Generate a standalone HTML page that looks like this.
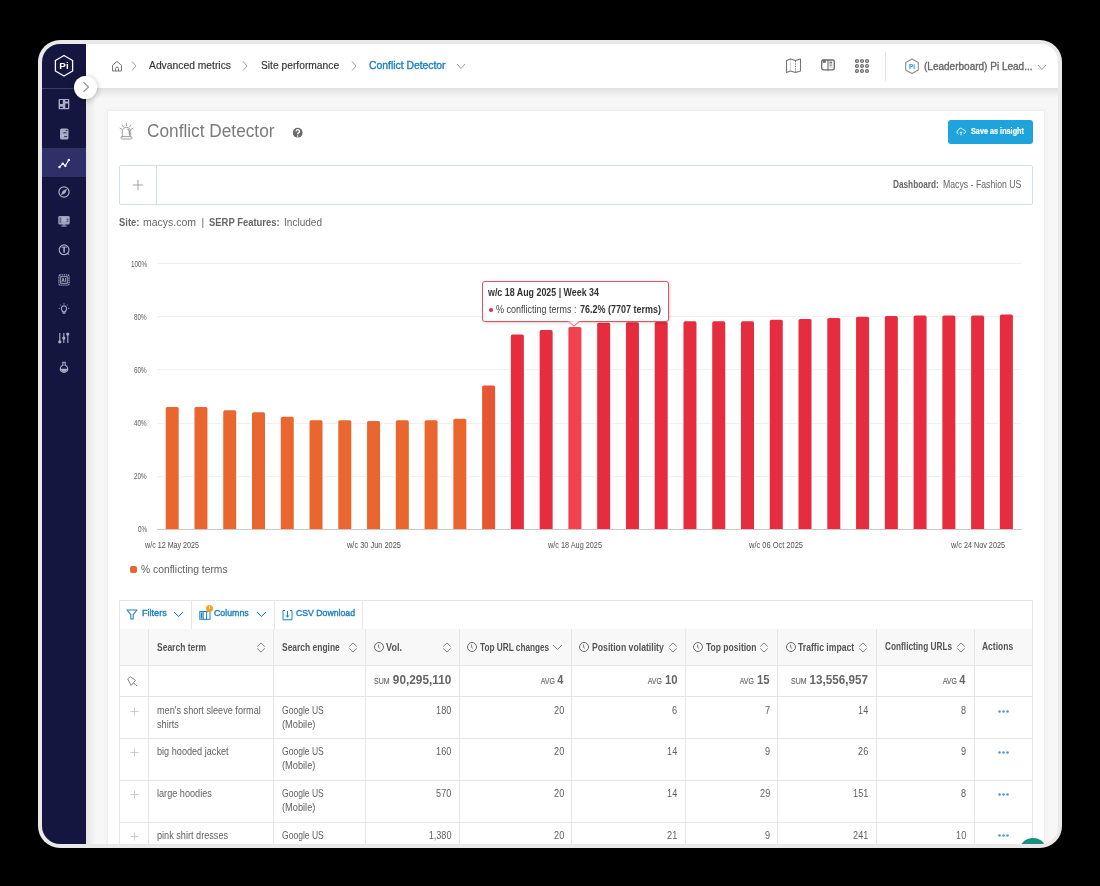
<!DOCTYPE html>
<html><head><meta charset="utf-8"><style>
html,body{margin:0;padding:0;}
body{width:1100px;height:886px;background:#000;position:relative;overflow:hidden;font-family:"Liberation Sans", sans-serif;}
.frame{position:absolute;left:38px;top:40px;width:1024px;height:808px;border-radius:22px;background:#e9e9e9;}
.clip{position:absolute;left:42px;top:44px;width:1016px;height:800px;border-radius:18px;overflow:hidden;background:#fff;}
.pg{will-change:transform;position:absolute;left:-42px;top:-44px;width:1100px;height:886px;}
.t{position:absolute;white-space:nowrap;line-height:1;font-family:"Liberation Sans", sans-serif;}
svg{overflow:visible;}
</style></head><body>
<div class="frame"></div>
<div class="clip"><div class="pg">
<div style="position:absolute;left:42.00px;top:44.00px;width:44.00px;height:800.00px;background:#15163f;"></div>
<div style="position:absolute;left:86.00px;top:88.00px;width:972.00px;height:756.00px;background:#f7f7f7;"></div>
<div style="position:absolute;left:86.00px;top:88.00px;width:10.00px;height:756.00px;background:linear-gradient(to right, rgba(0,0,0,0.075), rgba(0,0,0,0));"></div>
<div style="position:absolute;left:86.00px;top:44.00px;width:972.00px;height:44.00px;background:#fff;"></div>
<div style="position:absolute;left:86.00px;top:88.00px;width:972.00px;height:10.00px;background:linear-gradient(to bottom, rgba(0,0,0,0.09), rgba(0,0,0,0));"></div>
<svg style="position:absolute;left:53.00px;top:54.00px;" width="22" height="24" viewBox="0 0 22 24"><path d="M11 1.5 L19.6 6.5 L19.6 17 L11 22 L2.4 17 L2.4 6.5 Z" fill="none" stroke="#fff" stroke-width="1.3" stroke-linejoin="round"/><text x="11" y="15.3" text-anchor="middle" font-family="Liberation Sans" font-weight="700" font-size="9.8" fill="#fff">Pi</text></svg>
<div style="position:absolute;left:42.00px;top:88.00px;width:44.00px;height:1.00px;background:#3b3c68;"></div>
<div style="position:absolute;left:42.00px;top:147.50px;width:44.00px;height:29.00px;background:#303068;"></div>
<svg style="position:absolute;left:57.00px;top:97.00px;" width="14" height="14" viewBox="0 0 14 14"><path fill-rule="evenodd" fill="#aeaec8" d="M2.6 1.9 H11.3 Q12.3 1.9 12.3 2.9 V11.2 Q12.3 12.2 11.3 12.2 H2.6 Q1.6 12.2 1.6 11.2 V2.9 Q1.6 1.9 2.6 1.9 Z M3 3 H5.8 V7 H3 Z M8.3 3 H11 V4.4 H8.3 Z M3 9.8 H5.8 V10.9 H3 Z M8.3 6.4 H11 V10.9 H8.3 Z"/></svg>
<svg style="position:absolute;left:57.00px;top:126.50px;" width="14" height="14" viewBox="0 0 14 14"><rect x="3" y="1.6" width="8.5" height="10.9" rx="1.6" fill="#a9a9c4"/><path d="M8.2 4 L9.6 2.6 L11 4 Z" fill="#15163f" opacity="0.75"/><rect x="6.3" y="5.1" width="3.2" height="1.2" fill="#15163f" opacity="0.7"/><rect x="7.2" y="9" width="3" height="1.1" fill="#15163f" opacity="0.75"/><rect x="4.8" y="8.3" width="2" height="1" fill="#d0d0e2"/></svg>
<svg style="position:absolute;left:57.00px;top:155.50px;" width="14" height="14" viewBox="0 0 14 14"><g fill="none" stroke="#fff" stroke-width="1.05" stroke-linecap="round" stroke-linejoin="round"><polyline points="2.5,11 5.8,7.6 8.3,9.8 11.8,4"/></g><g fill="#fff"><circle cx="2.5" cy="11" r="1.2"/><circle cx="5.8" cy="7.6" r="1.2"/><circle cx="8.3" cy="9.8" r="1.2"/><circle cx="11.8" cy="4" r="1.2"/></g></svg>
<svg style="position:absolute;left:57.00px;top:184.60px;" width="14" height="14" viewBox="0 0 14 14"><circle cx="7" cy="7" r="5.1" fill="none" stroke="#aeaec8" stroke-width="1.2"/><path d="M10.2 3.8 L8.2 8.2 L3.8 10.2 L5.8 5.8 Z" fill="#aeaec8"/></svg>
<svg style="position:absolute;left:57.00px;top:213.50px;" width="14" height="14" viewBox="0 0 14 14"><rect x="1.3" y="2" width="11.4" height="8.4" rx="1.3" fill="#a2a2c0"/><rect x="2.6" y="3.3" width="1.6" height="5.8" fill="#15163f" opacity="0.45"/><g stroke="#15163f" stroke-width="0.8" opacity="0.8"><line x1="9.6" y1="5.3" x2="11.4" y2="5.3"/><line x1="9.6" y1="7.2" x2="11.4" y2="7.2"/></g><g stroke="#c4c4da" stroke-width="0.8"><line x1="5" y1="4.3" x2="9" y2="4.3"/><line x1="5" y1="6.3" x2="9" y2="6.3"/></g><rect x="5.6" y="10.4" width="2.8" height="1.2" fill="#a2a2c0"/><rect x="4.3" y="11.6" width="5.4" height="1" fill="#a2a2c0"/></svg>
<svg style="position:absolute;left:57.00px;top:243.00px;" width="14" height="14" viewBox="0 0 14 14"><circle cx="7.1" cy="6.8" r="4.9" fill="none" stroke="#aeaec8" stroke-width="1.15"/><path d="M4.6 4.6 Q4.9 4 5.6 4 H8.6 Q9.3 4 9.6 4.6" fill="none" stroke="#aeaec8" stroke-width="1.1"/><rect x="6.3" y="4" width="1.6" height="5.6" fill="#aeaec8"/><line x1="10.6" y1="10.4" x2="12" y2="11.6" stroke="#aeaec8" stroke-width="1.1"/></svg>
<svg style="position:absolute;left:57.00px;top:272.60px;" width="14" height="14" viewBox="0 0 14 14"><rect x="1.9" y="1.9" width="10.2" height="10.2" rx="1.4" fill="none" stroke="#aeaec8" stroke-width="1.3" stroke-dasharray="1.1,0.8"/><rect x="3.7" y="3.7" width="6.6" height="6.6" fill="none" stroke="#aeaec8" stroke-width="0.9"/><path d="M5 9 L6.1 5 L7.2 9 M5.4 7.7 H6.8 M8.6 5 V9" fill="none" stroke="#aeaec8" stroke-width="0.8"/></svg>
<svg style="position:absolute;left:57.00px;top:302.00px;" width="14" height="14" viewBox="0 0 14 14"><g transform="translate(7 7) scale(0.82) translate(-7 -7)"><path d="M7 3 a3.3 3.3 0 0 1 2 5.9 V10.4 H5 V8.9 a3.3 3.3 0 0 1 2 -5.9 Z" fill="none" stroke="#aeaec8" stroke-width="1.3"/><rect x="5.2" y="11" width="3.6" height="1.9" rx="0.6" fill="#aeaec8"/><g stroke="#aeaec8" stroke-width="1"><line x1="7" y1="0" x2="7" y2="1.6"/><line x1="2.4" y1="1.8" x2="3.5" y2="2.9"/><line x1="11.6" y1="1.8" x2="10.5" y2="2.9"/><line x1="0.4" y1="6.2" x2="2" y2="6.2"/><line x1="13.6" y1="6.2" x2="12" y2="6.2"/></g></g></svg>
<svg style="position:absolute;left:57.00px;top:331.20px;" width="14" height="14" viewBox="0 0 14 14"><g stroke="#aeaec8" stroke-width="1.1"><line x1="2.8" y1="2" x2="2.8" y2="12"/><line x1="6.8" y1="2" x2="6.8" y2="12"/><line x1="10.8" y1="2" x2="10.8" y2="12"/></g><circle cx="2.8" cy="10.8" r="1.6" fill="#aeaec8"/><circle cx="6.8" cy="7" r="1.6" fill="#aeaec8"/><circle cx="10.8" cy="3" r="1.6" fill="#aeaec8"/></svg>
<svg style="position:absolute;left:57.00px;top:360.30px;" width="14" height="14" viewBox="0 0 14 14"><path d="M5.9 2.2 H8.1 V5.3 A3.7 3.7 0 1 1 5.9 5.3 Z" fill="none" stroke="#aeaec8" stroke-width="1.15"/><path d="M3.9 8.7 A3.1 3.1 0 0 0 10.1 8.7 Z" fill="#aeaec8"/></svg>
<div style="position:absolute;left:74.3px;top:76.1px;width:22.8px;height:22.8px;border-radius:50%;background:#fff;box-shadow:0 1px 6px rgba(0,0,0,0.28);"></div>
<svg style="position:absolute;left:80.00px;top:81.00px;" width="12" height="12" viewBox="0 0 12 12"><polyline points="3.5,1.2 8.5,6 3.5,10.8" fill="none" stroke="#8a8a8a" stroke-width="1.1"/></svg>
<svg style="position:absolute;left:110.00px;top:59.00px;" width="14" height="14" viewBox="0 0 14 14"><path d="M2.5 12 V6.3 L7 2.4 L11.5 6.3 V12 Z" fill="none" stroke="#777" stroke-width="1" stroke-linejoin="round"/><path d="M5.5 12 V9.6 a1.5 1.5 0 0 1 3 0 V12" fill="none" stroke="#777" stroke-width="1"/></svg>
<svg style="position:absolute;left:130.00px;top:60.00px;" width="8" height="12" viewBox="0 0 8 12"><polyline points="2,1.5 6,6 2,10.5" fill="none" stroke="#9a9a9a" stroke-width="1"/></svg>
<div class="t" style="left:149.00px;top:60.68px;font-size:10.3px;color:#333;font-weight:400;transform:scaleX(1.0017);transform-origin:left;-webkit-text-stroke:0.15px #333;">Advanced metrics</div>
<svg style="position:absolute;left:241.00px;top:60.00px;" width="8" height="12" viewBox="0 0 8 12"><polyline points="2,1.5 6,6 2,10.5" fill="none" stroke="#9a9a9a" stroke-width="1"/></svg>
<div class="t" style="left:260.70px;top:60.68px;font-size:10.3px;color:#333;font-weight:400;transform:scaleX(0.9958);transform-origin:left;-webkit-text-stroke:0.15px #333;">Site performance</div>
<svg style="position:absolute;left:350.00px;top:60.00px;" width="8" height="12" viewBox="0 0 8 12"><polyline points="2,1.5 6,6 2,10.5" fill="none" stroke="#9a9a9a" stroke-width="1"/></svg>
<div class="t" style="left:369.20px;top:60.68px;font-size:10.3px;color:#1b80c2;font-weight:400;transform:scaleX(1.0061);transform-origin:left;-webkit-text-stroke:0.35px #1b80c2;">Conflict Detector</div>
<svg style="position:absolute;left:456.00px;top:62.00px;" width="10" height="8" viewBox="0 0 10 8"><polyline points="1,2 5.0,6.5 9,2" fill="none" stroke="#9a9a9a" stroke-width="1"/></svg>
<svg style="position:absolute;left:785.00px;top:57.00px;" width="17" height="17" viewBox="0 0 17 17"><path d="M1.5 3.5 L5.5 2 L10.5 3.5 L15.5 2 V14 L10.5 15.5 L5.5 14 L1.5 15.5 Z" fill="none" stroke="#747474" stroke-width="1.05" stroke-linejoin="round"/><line x1="5.5" y1="3.2" x2="5.5" y2="13.5" stroke="#b0b0b0" stroke-width="0.8" stroke-dasharray="1.2,0.9"/><line x1="10.5" y1="4" x2="10.5" y2="15" stroke="#6a6a6a" stroke-width="0.9" stroke-dasharray="1.3,1.1"/></svg>
<svg style="position:absolute;left:820.00px;top:58.00px;" width="16" height="15" viewBox="0 0 16 15"><rect x="1.7" y="2" width="12.6" height="9.8" rx="1.6" fill="none" stroke="#6a6a6a" stroke-width="1.3"/><rect x="2.8" y="2" width="3" height="2.8" fill="#6a6a6a"/><line x1="8" y1="2" x2="8" y2="11.8" stroke="#6a6a6a" stroke-width="1.1"/><rect x="9.4" y="3.6" width="2.8" height="1.9" fill="#777"/><rect x="9.4" y="6.6" width="3" height="1" fill="#6a6a6a"/><rect x="9.4" y="8.6" width="3" height="0.8" fill="#aaa"/><rect x="7.4" y="12.2" width="1.2" height="1" fill="#888"/></svg>
<svg style="position:absolute;left:855.00px;top:58.50px;" width="15" height="15" viewBox="0 0 15 15"><circle cx="2" cy="2" r="1.4" fill="none" stroke="#6b6b6b" stroke-width="1.35"/><circle cx="2" cy="7" r="1.4" fill="none" stroke="#6b6b6b" stroke-width="1.35"/><circle cx="2" cy="12" r="1.4" fill="none" stroke="#6b6b6b" stroke-width="1.35"/><circle cx="7" cy="2" r="1.4" fill="none" stroke="#6b6b6b" stroke-width="1.35"/><circle cx="7" cy="7" r="1.4" fill="none" stroke="#6b6b6b" stroke-width="1.35"/><circle cx="7" cy="12" r="1.4" fill="none" stroke="#6b6b6b" stroke-width="1.35"/><circle cx="12" cy="2" r="1.4" fill="none" stroke="#6b6b6b" stroke-width="1.35"/><circle cx="12" cy="7" r="1.4" fill="none" stroke="#6b6b6b" stroke-width="1.35"/><circle cx="12" cy="12" r="1.4" fill="none" stroke="#6b6b6b" stroke-width="1.35"/></svg>
<div style="position:absolute;left:885.00px;top:51.50px;width:1.00px;height:29.00px;background:#e3e3e3;"></div>
<svg style="position:absolute;left:903.50px;top:57.50px;" width="16" height="17" viewBox="0 0 16 17"><path d="M8 1 L14.3 4.6 V11.9 L8 15.5 L1.7 11.9 V4.6 Z" fill="none" stroke="#8c8c8c" stroke-width="1.1" stroke-linejoin="round"/><text x="8" y="11" text-anchor="middle" font-family="Liberation Sans" font-weight="700" font-size="6.5" fill="#2a94d6">Pi</text></svg>
<div class="t" style="left:924.00px;top:61.01px;font-size:10.5px;color:#666;font-weight:400;transform:scaleX(0.9532);transform-origin:left;-webkit-text-stroke:0.35px #666;">(Leaderboard) Pi Lead...</div>
<svg style="position:absolute;left:1037.00px;top:62.50px;" width="10" height="8" viewBox="0 0 10 8"><polyline points="1,2 5.0,6.5 9,2" fill="none" stroke="#9a9a9a" stroke-width="1"/></svg>
<div style="position:absolute;left:107.00px;top:110.00px;width:938.00px;height:790.00px;background:#fff;border:1px solid #ededed;box-sizing:border-box;box-shadow:0 0 4px rgba(0,0,0,0.04);"></div>
<svg style="position:absolute;left:119.00px;top:122.00px;" width="15" height="18" viewBox="0 0 15 18"><g fill="none" stroke="#9a9a9a" stroke-width="0.95" stroke-linecap="round"><path d="M3.3 14.8 V9.5 A4.2 4.2 0 0 1 11.7 9.5 V14.8"/><rect x="2" y="14.6" width="11" height="2.4" rx="1.2"/><line x1="7.5" y1="1.5" x2="7.5" y2="3.6"/><line x1="3.4" y1="3" x2="4.3" y2="4.8"/><line x1="11.6" y1="3" x2="10.7" y2="4.8"/><line x1="1" y1="6.2" x2="2.6" y2="7.2"/><line x1="14" y1="6.2" x2="12.4" y2="7.2"/><path d="M8.8 7.2 A2.6 2.6 0 0 1 10.4 9.6 V13" stroke-width="1.3"/></g></svg>
<div class="t" style="left:147.00px;top:122.99px;font-size:17.5px;color:#7a7a7a;font-weight:400;transform:scaleX(0.9857);transform-origin:left;">Conflict Detector</div>
<svg style="position:absolute;left:292.00px;top:127.20px;" width="12" height="12" viewBox="0 0 12 12"><circle cx="5.7" cy="5.7" r="4.9" fill="#6a6a6a"/><path d="M4.1 4.4 A1.7 1.7 0 1 1 6.5 5.9 Q5.7 6.4 5.7 7.3" fill="none" stroke="#fff" stroke-width="1.3"/><circle cx="5.7" cy="8.9" r="0.75" fill="#fff"/></svg>
<div style="position:absolute;left:948.00px;top:120.00px;width:84.70px;height:23.70px;background:#1fa3dd;border-radius:3px;"></div>
<svg style="position:absolute;left:955.50px;top:126.50px;" width="10" height="9" viewBox="0 0 10 9"><path d="M2.6 6.8 H2.2 A1.8 1.8 0 0 1 2.3 3.3 A2.5 2.5 0 0 1 7.1 2.8 A1.9 1.9 0 0 1 7.8 6.8 H7.4" fill="none" stroke="#fff" stroke-width="0.85"/><path d="M5 8.4 V4.8 M3.8 6 L5 4.7 L6.2 6" fill="none" stroke="#fff" stroke-width="0.85"/></svg>
<div class="t" style="left:971.00px;top:126.09px;font-size:9.7px;color:#fff;font-weight:700;transform:scaleX(0.7505);transform-origin:left;-webkit-text-stroke:0.2px #fff;">Save as insight</div>
<div style="position:absolute;left:119.00px;top:165.00px;width:914.00px;height:40.00px;border:1px solid #cfe1f0;border-radius:2px;box-sizing:border-box;"></div>
<div style="position:absolute;left:156.00px;top:165.00px;width:1.00px;height:40.00px;background:#cfe1f0;"></div>
<svg style="position:absolute;left:132.00px;top:179.00px;" width="12" height="12" viewBox="0 0 12 12"><path d="M6 0.8 V11.2 M0.8 6 H11.2" stroke="#999" stroke-width="0.9"/></svg>
<div class="t" style="left:892.50px;top:179.63px;font-size:10px;color:#666;font-weight:700;transform:scaleX(0.8243);transform-origin:left;">Dashboard:</div>
<div class="t" style="left:942.60px;top:179.63px;font-size:10px;color:#666;font-weight:400;transform:scaleX(0.8709);transform-origin:left;">Macys - Fashion US</div>
<div class="t" style="left:119.00px;top:218.18px;font-size:10.3px;color:#666;font-weight:700;transform:scaleX(0.914);transform-origin:left;">Site:</div>
<div class="t" style="left:143.40px;top:218.18px;font-size:10.3px;color:#666;font-weight:400;transform:scaleX(1.0177);transform-origin:left;">macys.com</div>
<div class="t" style="left:201.60px;top:218.18px;font-size:10.3px;color:#666;font-weight:400;">|</div>
<div class="t" style="left:209.40px;top:218.18px;font-size:10.3px;color:#666;font-weight:700;transform:scaleX(0.9158);transform-origin:left;">SERP Features:</div>
<div class="t" style="left:284.00px;top:218.18px;font-size:10.3px;color:#666;font-weight:400;transform:scaleX(0.9758);transform-origin:left;">Included</div>
<div style="position:absolute;left:157.00px;top:529.00px;width:865.00px;height:1.40px;background:#c9c9c9;"></div>
<div class="t" style="right:953.20px;top:525.47px;font-size:8.3px;color:#5a5a5a;font-weight:400;transform:scaleX(0.76);transform-origin:right;">0%</div>
<div style="position:absolute;left:157.00px;top:476.00px;width:865.00px;height:1.00px;background:#f0f0f0;"></div>
<div class="t" style="right:953.20px;top:472.33px;font-size:8.3px;color:#5a5a5a;font-weight:400;transform:scaleX(0.76);transform-origin:right;">20%</div>
<div style="position:absolute;left:157.00px;top:423.00px;width:865.00px;height:1.00px;background:#f0f0f0;"></div>
<div class="t" style="right:953.20px;top:419.19px;font-size:8.3px;color:#5a5a5a;font-weight:400;transform:scaleX(0.76);transform-origin:right;">40%</div>
<div style="position:absolute;left:157.00px;top:369.00px;width:865.00px;height:1.00px;background:#f0f0f0;"></div>
<div class="t" style="right:953.20px;top:366.05px;font-size:8.3px;color:#5a5a5a;font-weight:400;transform:scaleX(0.76);transform-origin:right;">60%</div>
<div style="position:absolute;left:157.00px;top:316.00px;width:865.00px;height:1.00px;background:#f0f0f0;"></div>
<div class="t" style="right:953.20px;top:312.91px;font-size:8.3px;color:#5a5a5a;font-weight:400;transform:scaleX(0.76);transform-origin:right;">80%</div>
<div style="position:absolute;left:157.00px;top:263.00px;width:865.00px;height:1.00px;background:#f0f0f0;"></div>
<div class="t" style="right:953.20px;top:259.77px;font-size:8.3px;color:#5a5a5a;font-weight:400;transform:scaleX(0.76);transform-origin:right;">100%</div>
<svg style="position:absolute;left:150.00px;top:250.00px;" width="880" height="285" viewBox="0 0 880 285"><rect x="14.70" y="155.91" width="15" height="123.59" fill="#fff"/><path d="M15.70,279.50 V158.51 Q15.70,156.91 17.30,156.91 H27.10 Q28.70,156.91 28.70,158.51 V279.50 Z" fill="#e9672e"/><rect x="43.46" y="155.91" width="15" height="123.59" fill="#fff"/><path d="M44.46,279.50 V158.51 Q44.46,156.91 46.06,156.91 H55.86 Q57.46,156.91 57.46,158.51 V279.50 Z" fill="#e9672e"/><rect x="72.23" y="159.37" width="15" height="120.13" fill="#fff"/><path d="M73.23,279.50 V161.97 Q73.23,160.37 74.83,160.37 H84.63 Q86.23,160.37 86.23,161.97 V279.50 Z" fill="#e9672e"/><rect x="101.00" y="161.23" width="15" height="118.27" fill="#fff"/><path d="M102.00,279.50 V163.83 Q102.00,162.23 103.59,162.23 H113.40 Q115.00,162.23 115.00,163.83 V279.50 Z" fill="#e9672e"/><rect x="129.76" y="165.74" width="15" height="113.76" fill="#fff"/><path d="M130.76,279.50 V168.34 Q130.76,166.74 132.36,166.74 H142.16 Q143.76,166.74 143.76,168.34 V279.50 Z" fill="#e9672e"/><rect x="158.52" y="169.20" width="15" height="110.30" fill="#fff"/><path d="M159.52,279.50 V171.80 Q159.52,170.20 161.12,170.20 H170.92 Q172.52,170.20 172.52,171.80 V279.50 Z" fill="#e9672e"/><rect x="187.29" y="169.20" width="15" height="110.30" fill="#fff"/><path d="M188.29,279.50 V171.80 Q188.29,170.20 189.89,170.20 H199.69 Q201.29,170.20 201.29,171.80 V279.50 Z" fill="#e9672e"/><rect x="216.06" y="169.99" width="15" height="109.51" fill="#fff"/><path d="M217.06,279.50 V172.59 Q217.06,170.99 218.66,170.99 H228.46 Q230.06,170.99 230.06,172.59 V279.50 Z" fill="#e9672e"/><rect x="244.82" y="169.20" width="15" height="110.30" fill="#fff"/><path d="M245.82,279.50 V171.80 Q245.82,170.20 247.42,170.20 H257.22 Q258.82,170.20 258.82,171.80 V279.50 Z" fill="#e9672e"/><rect x="273.58" y="169.20" width="15" height="110.30" fill="#fff"/><path d="M274.58,279.50 V171.80 Q274.58,170.20 276.19,170.20 H285.98 Q287.58,170.20 287.58,171.80 V279.50 Z" fill="#e9672e"/><rect x="302.35" y="167.87" width="15" height="111.63" fill="#fff"/><path d="M303.35,279.50 V170.47 Q303.35,168.87 304.95,168.87 H314.75 Q316.35,168.87 316.35,170.47 V279.50 Z" fill="#e9672e"/><rect x="331.12" y="134.39" width="15" height="145.11" fill="#fff"/><path d="M332.12,279.50 V136.99 Q332.12,135.39 333.72,135.39 H343.51 Q345.12,135.39 345.12,136.99 V279.50 Z" fill="#e75632"/><rect x="359.88" y="83.38" width="15" height="196.12" fill="#fff"/><path d="M360.88,279.50 V85.98 Q360.88,84.38 362.48,84.38 H372.28 Q373.88,84.38 373.88,85.98 V279.50 Z" fill="#e52d3f"/><rect x="388.64" y="79.12" width="15" height="200.38" fill="#fff"/><path d="M389.64,279.50 V81.72 Q389.64,80.12 391.25,80.12 H401.04 Q402.64,80.12 402.64,81.72 V279.50 Z" fill="#e52d3f"/><rect x="417.41" y="75.94" width="15" height="203.56" fill="#fff"/><path d="M418.41,279.50 V78.54 Q418.41,76.94 420.01,76.94 H429.81 Q431.41,76.94 431.41,78.54 V279.50 Z" fill="#f2414f"/><rect x="446.17" y="71.69" width="15" height="207.81" fill="#fff"/><path d="M447.17,279.50 V74.29 Q447.17,72.69 448.77,72.69 H458.57 Q460.17,72.69 460.17,74.29 V279.50 Z" fill="#e52d3f"/><rect x="474.94" y="71.15" width="15" height="208.35" fill="#fff"/><path d="M475.94,279.50 V73.75 Q475.94,72.15 477.54,72.15 H487.34 Q488.94,72.15 488.94,73.75 V279.50 Z" fill="#e52d3f"/><rect x="503.70" y="70.89" width="15" height="208.61" fill="#fff"/><path d="M504.70,279.50 V73.49 Q504.70,71.89 506.30,71.89 H516.10 Q517.70,71.89 517.70,73.49 V279.50 Z" fill="#e52d3f"/><rect x="532.47" y="70.36" width="15" height="209.14" fill="#fff"/><path d="M533.47,279.50 V72.96 Q533.47,71.36 535.07,71.36 H544.87 Q546.47,71.36 546.47,72.96 V279.50 Z" fill="#e52d3f"/><rect x="561.23" y="70.36" width="15" height="209.14" fill="#fff"/><path d="M562.23,279.50 V72.96 Q562.23,71.36 563.83,71.36 H573.63 Q575.23,71.36 575.23,72.96 V279.50 Z" fill="#e52d3f"/><rect x="590.00" y="70.36" width="15" height="209.14" fill="#fff"/><path d="M591.00,279.50 V72.96 Q591.00,71.36 592.60,71.36 H602.40 Q604.00,71.36 604.00,72.96 V279.50 Z" fill="#e52d3f"/><rect x="618.77" y="68.76" width="15" height="210.74" fill="#fff"/><path d="M619.77,279.50 V71.36 Q619.77,69.76 621.37,69.76 H631.17 Q632.77,69.76 632.77,71.36 V279.50 Z" fill="#e52d3f"/><rect x="647.53" y="67.97" width="15" height="211.53" fill="#fff"/><path d="M648.53,279.50 V70.57 Q648.53,68.97 650.13,68.97 H659.93 Q661.53,68.97 661.53,70.57 V279.50 Z" fill="#e52d3f"/><rect x="676.30" y="66.90" width="15" height="212.60" fill="#fff"/><path d="M677.30,279.50 V69.50 Q677.30,67.90 678.90,67.90 H688.70 Q690.30,67.90 690.30,69.50 V279.50 Z" fill="#e52d3f"/><rect x="705.06" y="65.84" width="15" height="213.66" fill="#fff"/><path d="M706.06,279.50 V68.44 Q706.06,66.84 707.66,66.84 H717.46 Q719.06,66.84 719.06,68.44 V279.50 Z" fill="#e52d3f"/><rect x="733.83" y="65.04" width="15" height="214.46" fill="#fff"/><path d="M734.83,279.50 V67.64 Q734.83,66.04 736.43,66.04 H746.23 Q747.83,66.04 747.83,67.64 V279.50 Z" fill="#e52d3f"/><rect x="762.59" y="64.51" width="15" height="214.99" fill="#fff"/><path d="M763.59,279.50 V67.11 Q763.59,65.51 765.19,65.51 H774.99 Q776.59,65.51 776.59,67.11 V279.50 Z" fill="#e52d3f"/><rect x="791.36" y="64.51" width="15" height="214.99" fill="#fff"/><path d="M792.36,279.50 V67.11 Q792.36,65.51 793.96,65.51 H803.75 Q805.36,65.51 805.36,67.11 V279.50 Z" fill="#e52d3f"/><rect x="820.12" y="64.51" width="15" height="214.99" fill="#fff"/><path d="M821.12,279.50 V67.11 Q821.12,65.51 822.72,65.51 H832.52 Q834.12,65.51 834.12,67.11 V279.50 Z" fill="#e52d3f"/><rect x="848.88" y="63.45" width="15" height="216.05" fill="#fff"/><path d="M849.88,279.50 V66.05 Q849.88,64.45 851.49,64.45 H861.28 Q862.88,64.45 862.88,66.05 V279.50 Z" fill="#e52d3f"/></svg>
<div style="position:absolute;left:157.00px;top:529.00px;width:865.00px;height:1.40px;background:#c9c9c9;"></div>
<div class="t" style="left:172.20px;top:541.32px;font-size:8.6px;color:#4f4f4f;font-weight:400;transform:translateX(-50%) scaleX(0.8306);transform-origin:center;">w/c 12 May 2025</div>
<div class="t" style="left:373.56px;top:541.32px;font-size:8.6px;color:#4f4f4f;font-weight:400;transform:translateX(-50%) scaleX(0.8622);transform-origin:center;">w/c 30 Jun 2025</div>
<div class="t" style="left:574.91px;top:541.32px;font-size:8.6px;color:#4f4f4f;font-weight:400;transform:translateX(-50%) scaleX(0.8491);transform-origin:center;">w/c 18 Aug 2025</div>
<div class="t" style="left:776.27px;top:541.32px;font-size:8.6px;color:#4f4f4f;font-weight:400;transform:translateX(-50%) scaleX(0.8689);transform-origin:center;">w/c 06 Oct 2025</div>
<div class="t" style="left:977.62px;top:541.32px;font-size:8.6px;color:#4f4f4f;font-weight:400;transform:translateX(-50%) scaleX(0.843);transform-origin:center;">w/c 24 Nov 2025</div>
<div style="position:absolute;left:129.80px;top:565.80px;width:7.40px;height:7.40px;background:#e9672e;border-radius:2px;"></div>
<div class="t" style="left:141.20px;top:565.27px;font-size:10.2px;color:#5f5f5f;font-weight:400;transform:scaleX(1.0129);transform-origin:left;">% conflicting terms</div>
<div style="position:absolute;left:481.5px;top:280.9px;width:187px;height:41.6px;box-sizing:border-box;background:#fff;border:1px solid #e8505c;border-radius:3px;box-shadow:1px 1px 3px rgba(0,0,0,0.18);"></div>
<svg style="position:absolute;left:568.00px;top:320.00px;" width="12" height="8" viewBox="0 0 12 8"><path d="M0.5 1.2 L6 6.2 L11.5 1.2" fill="#fff" stroke="#e8505c" stroke-width="1"/><rect x="0" y="-1" width="12" height="2.2" fill="#fff"/></svg>
<div class="t" style="left:488.00px;top:288.44px;font-size:10px;color:#333;font-weight:700;transform:scaleX(0.8866);transform-origin:left;">w/c 18 Aug 2025 | Week 34</div>
<div style="position:absolute;left:488.6px;top:308px;width:4px;height:4px;border-radius:50%;background:#e5283f;"></div>
<div class="t" style="left:496.30px;top:304.63px;font-size:10px;color:#444;font-weight:400;transform:scaleX(0.8997);transform-origin:left;">% conflicting terms : </div>
<div class="t" style="left:580.00px;top:304.63px;font-size:10px;color:#333;font-weight:700;transform:scaleX(0.8995);transform-origin:left;">76.2% (7707 terms)</div>
<div style="position:absolute;left:119.00px;top:629.00px;width:913.00px;height:36.50px;background:#f8f8f8;"></div>
<div style="position:absolute;left:119.00px;top:600.00px;width:1.00px;height:300.00px;background:#e6e6e6;"></div>
<div style="position:absolute;left:1032.00px;top:600.00px;width:1.00px;height:300.00px;background:#e6e6e6;"></div>
<div style="position:absolute;left:119.00px;top:600.00px;width:914.00px;height:1.00px;background:#e6e6e6;"></div>
<div style="position:absolute;left:191.00px;top:600.00px;width:1.00px;height:29.00px;background:#e6e6e6;"></div>
<div style="position:absolute;left:274.00px;top:600.00px;width:1.00px;height:29.00px;background:#e6e6e6;"></div>
<div style="position:absolute;left:362.00px;top:600.00px;width:1.00px;height:29.00px;background:#e6e6e6;"></div>
<div style="position:absolute;left:119.00px;top:665.00px;width:914.00px;height:1.00px;background:#e6e6e6;"></div>
<div style="position:absolute;left:119.00px;top:696.00px;width:914.00px;height:1.00px;background:#e6e6e6;"></div>
<div style="position:absolute;left:119.00px;top:738.00px;width:914.00px;height:1.00px;background:#e6e6e6;"></div>
<div style="position:absolute;left:119.00px;top:780.00px;width:914.00px;height:1.00px;background:#e6e6e6;"></div>
<div style="position:absolute;left:119.00px;top:822.00px;width:914.00px;height:1.00px;background:#e6e6e6;"></div>
<div style="position:absolute;left:148.00px;top:629.00px;width:1.00px;height:271.00px;background:#e6e6e6;"></div>
<div style="position:absolute;left:273.00px;top:629.00px;width:1.00px;height:271.00px;background:#e6e6e6;"></div>
<div style="position:absolute;left:365.00px;top:629.00px;width:1.00px;height:271.00px;background:#e6e6e6;"></div>
<div style="position:absolute;left:459.00px;top:629.00px;width:1.00px;height:271.00px;background:#e6e6e6;"></div>
<div style="position:absolute;left:571.00px;top:629.00px;width:1.00px;height:271.00px;background:#e6e6e6;"></div>
<div style="position:absolute;left:685.00px;top:629.00px;width:1.00px;height:271.00px;background:#e6e6e6;"></div>
<div style="position:absolute;left:777.00px;top:629.00px;width:1.00px;height:271.00px;background:#e6e6e6;"></div>
<div style="position:absolute;left:876.00px;top:629.00px;width:1.00px;height:271.00px;background:#e6e6e6;"></div>
<div style="position:absolute;left:974.00px;top:629.00px;width:1.00px;height:271.00px;background:#e6e6e6;"></div>
<svg style="position:absolute;left:126.00px;top:609.00px;" width="12" height="11" viewBox="0 0 12 11"><path d="M1 1 H11 L7.2 5.6 V10 H4.8 V5.6 Z" fill="none" stroke="#1c80c3" stroke-width="1.05" stroke-linejoin="round"/></svg>
<div class="t" style="left:141.50px;top:608.40px;font-size:9.8px;color:#1c80c3;font-weight:400;transform:scaleX(0.9259);transform-origin:left;-webkit-text-stroke:0.4px #1c80c3;">Filters</div>
<svg style="position:absolute;left:173.20px;top:609.80px;" width="11" height="8" viewBox="0 0 11 8"><polyline points="1,2 5.5,6.5 10,2" fill="none" stroke="#1c80c3" stroke-width="1"/></svg>
<svg style="position:absolute;left:198.50px;top:609.00px;" width="12" height="11" viewBox="0 0 12 11"><g fill="none" stroke="#1c80c3" stroke-width="1"><rect x="0.8" y="2.5" width="10.2" height="7.8"/><line x1="4.2" y1="2.5" x2="4.2" y2="10.3"/><line x1="7.6" y1="2.5" x2="7.6" y2="10.3"/></g><rect x="1.8" y="3.5" width="1.6" height="6" fill="#1c80c3"/></svg>
<div style="position:absolute;left:205.8px;top:604.8px;width:7.6px;height:7.6px;border-radius:50%;background:#f5a31f;"></div>
<div style="position:absolute;left:209.1px;top:606.3px;width:1px;height:3.2px;background:#fff;opacity:0.8"></div>
<div class="t" style="left:213.70px;top:608.40px;font-size:9.8px;color:#1c80c3;font-weight:400;transform:scaleX(0.8974);transform-origin:left;-webkit-text-stroke:0.4px #1c80c3;">Columns</div>
<svg style="position:absolute;left:256.00px;top:609.80px;" width="11" height="8" viewBox="0 0 11 8"><polyline points="1,2 5.5,6.5 10,2" fill="none" stroke="#1c80c3" stroke-width="1"/></svg>
<svg style="position:absolute;left:281.50px;top:608.50px;" width="11" height="12" viewBox="0 0 11 12"><g fill="none" stroke="#1c80c3" stroke-width="1"><path d="M3 1.5 H1 V10.8 H10 V1.5 H8"/><path d="M5.5 2 V8 M3.6 6.2 L5.5 8 L7.4 6.2"/></g></svg>
<div class="t" style="left:296.00px;top:608.40px;font-size:9.8px;color:#1c80c3;font-weight:400;transform:scaleX(0.8878);transform-origin:left;-webkit-text-stroke:0.4px #1c80c3;">CSV Download</div>
<div class="t" style="left:156.90px;top:642.74px;font-size:10px;color:#555;font-weight:700;transform:scaleX(0.8494);transform-origin:left;">Search term</div>
<svg style="position:absolute;left:255.80px;top:641.80px;" width="10" height="11" viewBox="0 0 10 11"><polyline points="1.2,4.6 5,0.9 8.8,4.6" fill="none" stroke="#7a7a7a" stroke-width="0.95"/><polyline points="1.2,6.4 5,10.1 8.8,6.4" fill="none" stroke="#7a7a7a" stroke-width="0.95"/></svg>
<div class="t" style="left:281.80px;top:642.74px;font-size:10px;color:#555;font-weight:700;transform:scaleX(0.8455);transform-origin:left;">Search engine</div>
<svg style="position:absolute;left:347.70px;top:641.80px;" width="10" height="11" viewBox="0 0 10 11"><polyline points="1.2,4.6 5,0.9 8.8,4.6" fill="none" stroke="#7a7a7a" stroke-width="0.95"/><polyline points="1.2,6.4 5,10.1 8.8,6.4" fill="none" stroke="#7a7a7a" stroke-width="0.95"/></svg>
<svg style="position:absolute;left:372.70px;top:640.60px;" width="12" height="12" viewBox="0 0 12 12"><circle cx="6" cy="6" r="4.5" fill="none" stroke="#6a6a6a" stroke-width="1"/><path d="M5.6 3.6 L5.6 6 L6.6 7.6" fill="none" stroke="#6a6a6a" stroke-width="0.9"/></svg>
<div class="t" style="left:386.30px;top:642.74px;font-size:10px;color:#555;font-weight:700;transform:scaleX(0.9095);transform-origin:left;">Vol.</div>
<svg style="position:absolute;left:441.50px;top:641.80px;" width="10" height="11" viewBox="0 0 10 11"><polyline points="1.2,4.6 5,0.9 8.8,4.6" fill="none" stroke="#7a7a7a" stroke-width="0.95"/><polyline points="1.2,6.4 5,10.1 8.8,6.4" fill="none" stroke="#7a7a7a" stroke-width="0.95"/></svg>
<svg style="position:absolute;left:465.90px;top:640.60px;" width="12" height="12" viewBox="0 0 12 12"><circle cx="6" cy="6" r="4.5" fill="none" stroke="#6a6a6a" stroke-width="1"/><path d="M5.6 3.6 L5.6 6 L6.6 7.6" fill="none" stroke="#6a6a6a" stroke-width="0.9"/></svg>
<div class="t" style="left:480.00px;top:642.74px;font-size:10px;color:#555;font-weight:700;transform:scaleX(0.823);transform-origin:left;">Top URL changes</div>
<svg style="position:absolute;left:552.30px;top:643.00px;" width="11" height="8" viewBox="0 0 11 8"><polyline points="1,2 5.5,6.5 10,2" fill="none" stroke="#777" stroke-width="0.95"/></svg>
<svg style="position:absolute;left:578.00px;top:640.60px;" width="12" height="12" viewBox="0 0 12 12"><circle cx="6" cy="6" r="4.5" fill="none" stroke="#6a6a6a" stroke-width="1"/><path d="M5.6 3.6 L5.6 6 L6.6 7.6" fill="none" stroke="#6a6a6a" stroke-width="0.9"/></svg>
<div class="t" style="left:591.80px;top:642.74px;font-size:10px;color:#555;font-weight:700;transform:scaleX(0.8673);transform-origin:left;">Position volatility</div>
<svg style="position:absolute;left:667.80px;top:641.80px;" width="10" height="11" viewBox="0 0 10 11"><polyline points="1.2,4.6 5,0.9 8.8,4.6" fill="none" stroke="#7a7a7a" stroke-width="0.95"/><polyline points="1.2,6.4 5,10.1 8.8,6.4" fill="none" stroke="#7a7a7a" stroke-width="0.95"/></svg>
<svg style="position:absolute;left:692.00px;top:640.60px;" width="12" height="12" viewBox="0 0 12 12"><circle cx="6" cy="6" r="4.5" fill="none" stroke="#6a6a6a" stroke-width="1"/><path d="M5.6 3.6 L5.6 6 L6.6 7.6" fill="none" stroke="#6a6a6a" stroke-width="0.9"/></svg>
<div class="t" style="left:705.50px;top:642.74px;font-size:10px;color:#555;font-weight:700;transform:scaleX(0.8524);transform-origin:left;">Top position</div>
<svg style="position:absolute;left:759.40px;top:641.80px;" width="10" height="11" viewBox="0 0 10 11"><polyline points="1.2,4.6 5,0.9 8.8,4.6" fill="none" stroke="#7a7a7a" stroke-width="0.95"/><polyline points="1.2,6.4 5,10.1 8.8,6.4" fill="none" stroke="#7a7a7a" stroke-width="0.95"/></svg>
<svg style="position:absolute;left:784.60px;top:640.60px;" width="12" height="12" viewBox="0 0 12 12"><circle cx="6" cy="6" r="4.5" fill="none" stroke="#6a6a6a" stroke-width="1"/><path d="M5.6 3.6 L5.6 6 L6.6 7.6" fill="none" stroke="#6a6a6a" stroke-width="0.9"/></svg>
<div class="t" style="left:797.80px;top:642.74px;font-size:10px;color:#555;font-weight:700;transform:scaleX(0.8644);transform-origin:left;">Traffic impact</div>
<svg style="position:absolute;left:858.20px;top:641.80px;" width="10" height="11" viewBox="0 0 10 11"><polyline points="1.2,4.6 5,0.9 8.8,4.6" fill="none" stroke="#7a7a7a" stroke-width="0.95"/><polyline points="1.2,6.4 5,10.1 8.8,6.4" fill="none" stroke="#7a7a7a" stroke-width="0.95"/></svg>
<div class="t" style="left:884.50px;top:641.94px;font-size:10px;color:#555;font-weight:700;transform:scaleX(0.8273);transform-origin:left;">Conflicting URLs</div>
<svg style="position:absolute;left:955.80px;top:641.80px;" width="10" height="11" viewBox="0 0 10 11"><polyline points="1.2,4.6 5,0.9 8.8,4.6" fill="none" stroke="#7a7a7a" stroke-width="0.95"/><polyline points="1.2,6.4 5,10.1 8.8,6.4" fill="none" stroke="#7a7a7a" stroke-width="0.95"/></svg>
<div class="t" style="left:981.70px;top:641.94px;font-size:10px;color:#555;font-weight:700;transform:scaleX(0.8481);transform-origin:left;">Actions</div>
<svg style="position:absolute;left:126.00px;top:675.00px;" width="13" height="13" viewBox="0 0 13 13"><g fill="none" stroke="#777" stroke-width="0.9" stroke-linejoin="round" stroke-linecap="round"><path d="M2 3.7 L4.2 1.7 L9.5 5.4 L5.4 10.2 Z"/><line x1="7.6" y1="8" x2="10.9" y2="10.9"/></g></svg>
<div class="t" style="right:648.80px;top:673.43px;font-size:13.2px;color:#666;font-weight:700;transform:scaleX(0.8954);transform-origin:right;">90,295,110</div>
<div class="t" style="right:710.10px;top:677.15px;font-size:8.8px;color:#666;font-weight:400;transform:scaleX(0.7926);transform-origin:right;-webkit-text-stroke:0.15px #666;">SUM</div>
<div class="t" style="right:536.60px;top:673.43px;font-size:13.2px;color:#666;font-weight:700;transform:scaleX(0.8309);transform-origin:right;">4</div>
<div class="t" style="right:545.50px;top:677.15px;font-size:8.8px;color:#666;font-weight:400;transform:scaleX(0.7919);transform-origin:right;-webkit-text-stroke:0.15px #666;">AVG</div>
<div class="t" style="right:422.60px;top:673.43px;font-size:13.2px;color:#666;font-weight:700;transform:scaleX(0.8582);transform-origin:right;">10</div>
<div class="t" style="right:438.00px;top:677.15px;font-size:8.8px;color:#666;font-weight:400;transform:scaleX(0.7919);transform-origin:right;-webkit-text-stroke:0.15px #666;">AVG</div>
<div class="t" style="right:330.70px;top:673.43px;font-size:13.2px;color:#666;font-weight:700;transform:scaleX(0.8582);transform-origin:right;">15</div>
<div class="t" style="right:346.10px;top:677.15px;font-size:8.8px;color:#666;font-weight:400;transform:scaleX(0.7919);transform-origin:right;-webkit-text-stroke:0.15px #666;">AVG</div>
<div class="t" style="right:231.80px;top:673.43px;font-size:13.2px;color:#666;font-weight:700;transform:scaleX(0.8855);transform-origin:right;">13,556,957</div>
<div class="t" style="right:293.10px;top:677.15px;font-size:8.8px;color:#666;font-weight:400;transform:scaleX(0.7926);transform-origin:right;-webkit-text-stroke:0.15px #666;">SUM</div>
<div class="t" style="right:134.30px;top:673.43px;font-size:13.2px;color:#666;font-weight:700;transform:scaleX(0.8309);transform-origin:right;">4</div>
<div class="t" style="right:143.20px;top:677.15px;font-size:8.8px;color:#666;font-weight:400;transform:scaleX(0.7919);transform-origin:right;-webkit-text-stroke:0.15px #666;">AVG</div>
<svg style="position:absolute;left:129.50px;top:706.90px;" width="9" height="9" viewBox="0 0 9 9"><path d="M4.5 0.5 V8.5 M0.5 4.5 H8.5" stroke="#c6c6c6" stroke-width="0.9"/></svg>
<div class="t" style="left:156.60px;top:704.89px;font-size:11px;color:#5f5f5f;font-weight:400;transform:scaleX(0.83);transform-origin:left;">men&#39;s short sleeve formal</div>
<div class="t" style="left:156.60px;top:718.99px;font-size:11px;color:#5f5f5f;font-weight:400;transform:scaleX(0.83);transform-origin:left;">shirts</div>
<div class="t" style="left:281.60px;top:704.89px;font-size:11px;color:#5f5f5f;font-weight:400;transform:scaleX(0.7768);transform-origin:left;">Google US</div>
<div class="t" style="left:281.60px;top:718.99px;font-size:11px;color:#5f5f5f;font-weight:400;transform:scaleX(0.8407);transform-origin:left;">(Mobile)</div>
<div class="t" style="right:648.80px;top:704.89px;font-size:11px;color:#5f5f5f;font-weight:400;transform:scaleX(0.83);transform-origin:right;">180</div>
<div class="t" style="right:536.20px;top:704.89px;font-size:11px;color:#5f5f5f;font-weight:400;transform:scaleX(0.83);transform-origin:right;">20</div>
<div class="t" style="right:422.80px;top:704.89px;font-size:11px;color:#5f5f5f;font-weight:400;transform:scaleX(0.83);transform-origin:right;">6</div>
<div class="t" style="right:330.00px;top:704.89px;font-size:11px;color:#5f5f5f;font-weight:400;transform:scaleX(0.83);transform-origin:right;">7</div>
<div class="t" style="right:231.50px;top:704.89px;font-size:11px;color:#5f5f5f;font-weight:400;transform:scaleX(0.83);transform-origin:right;">14</div>
<div class="t" style="right:134.00px;top:704.89px;font-size:11px;color:#5f5f5f;font-weight:400;transform:scaleX(0.83);transform-origin:right;">8</div>
<svg style="position:absolute;left:997.00px;top:708.50px;" width="14" height="5" viewBox="0 0 14 5"><circle cx="2.5" cy="2.5" r="1.25" fill="#4a98d6"/><circle cx="6.5" cy="2.5" r="1.25" fill="#4a98d6"/><circle cx="10.5" cy="2.5" r="1.25" fill="#4a98d6"/></svg>
<svg style="position:absolute;left:129.50px;top:748.40px;" width="9" height="9" viewBox="0 0 9 9"><path d="M4.5 0.5 V8.5 M0.5 4.5 H8.5" stroke="#c6c6c6" stroke-width="0.9"/></svg>
<div class="t" style="left:156.60px;top:746.39px;font-size:11px;color:#5f5f5f;font-weight:400;transform:scaleX(0.83);transform-origin:left;">big hooded jacket</div>
<div class="t" style="left:281.60px;top:746.39px;font-size:11px;color:#5f5f5f;font-weight:400;transform:scaleX(0.7768);transform-origin:left;">Google US</div>
<div class="t" style="left:281.60px;top:760.49px;font-size:11px;color:#5f5f5f;font-weight:400;transform:scaleX(0.8407);transform-origin:left;">(Mobile)</div>
<div class="t" style="right:648.80px;top:746.39px;font-size:11px;color:#5f5f5f;font-weight:400;transform:scaleX(0.83);transform-origin:right;">160</div>
<div class="t" style="right:536.20px;top:746.39px;font-size:11px;color:#5f5f5f;font-weight:400;transform:scaleX(0.83);transform-origin:right;">20</div>
<div class="t" style="right:422.80px;top:746.39px;font-size:11px;color:#5f5f5f;font-weight:400;transform:scaleX(0.83);transform-origin:right;">14</div>
<div class="t" style="right:330.00px;top:746.39px;font-size:11px;color:#5f5f5f;font-weight:400;transform:scaleX(0.83);transform-origin:right;">9</div>
<div class="t" style="right:231.50px;top:746.39px;font-size:11px;color:#5f5f5f;font-weight:400;transform:scaleX(0.83);transform-origin:right;">26</div>
<div class="t" style="right:134.00px;top:746.39px;font-size:11px;color:#5f5f5f;font-weight:400;transform:scaleX(0.83);transform-origin:right;">9</div>
<svg style="position:absolute;left:997.00px;top:750.00px;" width="14" height="5" viewBox="0 0 14 5"><circle cx="2.5" cy="2.5" r="1.25" fill="#4a98d6"/><circle cx="6.5" cy="2.5" r="1.25" fill="#4a98d6"/><circle cx="10.5" cy="2.5" r="1.25" fill="#4a98d6"/></svg>
<svg style="position:absolute;left:129.50px;top:790.00px;" width="9" height="9" viewBox="0 0 9 9"><path d="M4.5 0.5 V8.5 M0.5 4.5 H8.5" stroke="#c6c6c6" stroke-width="0.9"/></svg>
<div class="t" style="left:156.60px;top:787.99px;font-size:11px;color:#5f5f5f;font-weight:400;transform:scaleX(0.83);transform-origin:left;">large hoodies</div>
<div class="t" style="left:281.60px;top:787.99px;font-size:11px;color:#5f5f5f;font-weight:400;transform:scaleX(0.7768);transform-origin:left;">Google US</div>
<div class="t" style="left:281.60px;top:802.09px;font-size:11px;color:#5f5f5f;font-weight:400;transform:scaleX(0.8407);transform-origin:left;">(Mobile)</div>
<div class="t" style="right:648.80px;top:787.99px;font-size:11px;color:#5f5f5f;font-weight:400;transform:scaleX(0.83);transform-origin:right;">570</div>
<div class="t" style="right:536.20px;top:787.99px;font-size:11px;color:#5f5f5f;font-weight:400;transform:scaleX(0.83);transform-origin:right;">20</div>
<div class="t" style="right:422.80px;top:787.99px;font-size:11px;color:#5f5f5f;font-weight:400;transform:scaleX(0.83);transform-origin:right;">14</div>
<div class="t" style="right:330.00px;top:787.99px;font-size:11px;color:#5f5f5f;font-weight:400;transform:scaleX(0.83);transform-origin:right;">29</div>
<div class="t" style="right:231.50px;top:787.99px;font-size:11px;color:#5f5f5f;font-weight:400;transform:scaleX(0.83);transform-origin:right;">151</div>
<div class="t" style="right:134.00px;top:787.99px;font-size:11px;color:#5f5f5f;font-weight:400;transform:scaleX(0.83);transform-origin:right;">8</div>
<svg style="position:absolute;left:997.00px;top:791.60px;" width="14" height="5" viewBox="0 0 14 5"><circle cx="2.5" cy="2.5" r="1.25" fill="#4a98d6"/><circle cx="6.5" cy="2.5" r="1.25" fill="#4a98d6"/><circle cx="10.5" cy="2.5" r="1.25" fill="#4a98d6"/></svg>
<svg style="position:absolute;left:129.50px;top:831.60px;" width="9" height="9" viewBox="0 0 9 9"><path d="M4.5 0.5 V8.5 M0.5 4.5 H8.5" stroke="#c6c6c6" stroke-width="0.9"/></svg>
<div class="t" style="left:156.60px;top:829.59px;font-size:11px;color:#5f5f5f;font-weight:400;transform:scaleX(0.83);transform-origin:left;">pink shirt dresses</div>
<div class="t" style="left:281.60px;top:829.59px;font-size:11px;color:#5f5f5f;font-weight:400;transform:scaleX(0.7768);transform-origin:left;">Google US</div>
<div class="t" style="right:648.80px;top:829.59px;font-size:11px;color:#5f5f5f;font-weight:400;transform:scaleX(0.83);transform-origin:right;">1,380</div>
<div class="t" style="right:536.20px;top:829.59px;font-size:11px;color:#5f5f5f;font-weight:400;transform:scaleX(0.83);transform-origin:right;">20</div>
<div class="t" style="right:422.80px;top:829.59px;font-size:11px;color:#5f5f5f;font-weight:400;transform:scaleX(0.83);transform-origin:right;">21</div>
<div class="t" style="right:330.00px;top:829.59px;font-size:11px;color:#5f5f5f;font-weight:400;transform:scaleX(0.83);transform-origin:right;">9</div>
<div class="t" style="right:231.50px;top:829.59px;font-size:11px;color:#5f5f5f;font-weight:400;transform:scaleX(0.83);transform-origin:right;">241</div>
<div class="t" style="right:134.00px;top:829.59px;font-size:11px;color:#5f5f5f;font-weight:400;transform:scaleX(0.83);transform-origin:right;">10</div>
<svg style="position:absolute;left:997.00px;top:833.20px;" width="14" height="5" viewBox="0 0 14 5"><circle cx="2.5" cy="2.5" r="1.25" fill="#4a98d6"/><circle cx="6.5" cy="2.5" r="1.25" fill="#4a98d6"/><circle cx="10.5" cy="2.5" r="1.25" fill="#4a98d6"/></svg>
<div style="position:absolute;left:1018.8px;top:838px;width:28px;height:28px;border-radius:50%;background:#17907e;"></div>
</div></div>
</body></html>
